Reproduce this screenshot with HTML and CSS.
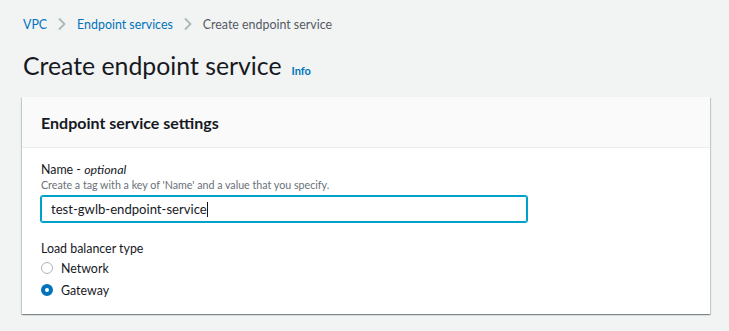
FILE: index.html
```html
<!DOCTYPE html>
<html lang="en">
<head>
<meta charset="UTF-8">
<meta name="viewport" content="width=device-width, initial-scale=1.0">
<title>Create endpoint service</title>
<link rel="stylesheet" href="styles.css">
</head>
<body>
    <div class="page">
        <nav class="breadcrumbs">
            <a href="#">VPC</a>
            <svg class="chevron" width="10" height="14" viewBox="0 0 10 14"><path d="M2 1.5l5.5 5.5L2 12.5" fill="none" stroke="#aab7b8" stroke-width="1.8"/></svg>
            <a href="#">Endpoint services</a>
            <svg class="chevron" width="10" height="14" viewBox="0 0 10 14"><path d="M2 1.5l5.5 5.5L2 12.5" fill="none" stroke="#aab7b8" stroke-width="1.8"/></svg>
            <span class="current">Create endpoint service</span>
        </nav>

        <div class="page-title">
            <h1>Create endpoint service</h1>
            <a href="#" class="info">Info</a>
        </div>

        <div class="panel">
            <div class="panel-header">
                <h2>Endpoint service settings</h2>
            </div>
            <div class="panel-body">
                <div class="field">
                    <label class="field-label">Name - <i>optional</i></label>
                    <div class="field-hint">Create a tag with a key of 'Name' and a value that you specify.</div>
                    <div class="text-input">test-gwlb-endpoint-service<span class="caret"></span></div>
                </div>
                <div class="field">
                    <label class="field-label">Load balancer type</label>
                    <div class="radio">
                        <span class="radio-dot"></span>
                        <span>Network</span>
                    </div>
                    <div class="radio">
                        <span class="radio-dot checked"></span>
                        <span>Gateway</span>
                    </div>
                </div>
            </div>
        </div>
    </div>
</body>
</html>
```

FILE: styles.css
```css
body {
    margin: 0;
    background-color: #f2f3f3;
    font-family: Lato, "Open Sans", Arial, sans-serif;
    color: #16191f;
}
.page {
    padding: 15px 19px 16px 22px;
}
.breadcrumbs {
    display: flex;
    align-items: center;
    height: 18px;
    font-size: 12.4px;
    padding-left: 1px;
}
.breadcrumbs a {
    color: #0073bb;
    text-decoration: none;
}
.breadcrumbs .current {
    color: #545b64;
}
.chevron {
    margin: 0 10px;
}
.page-title {
    display: flex;
    align-items: baseline;
    margin-top: 18px;
    height: 34px;
}
h1 {
    margin: 0;
    font-size: 24.8px;
    font-weight: 400;
    padding-left: 1px;
}
.info {
    margin-left: 10px;
    font-size: 11px;
    font-weight: 700;
    color: #0073bb;
    text-decoration: none;
}
.panel {
    margin-top: 12px;
    background-color: #fff;
    box-shadow: 0 1px 1px 0 rgba(0, 28, 36, 0.3), 1px 1px 1px 0 rgba(0, 28, 36, 0.15), -1px 1px 1px 0 rgba(0, 28, 36, 0.15);
}
.panel-header {
    height: 50px;
    display: flex;
    align-items: center;
    padding-left: 19px;
    background-color: #fafafa;
    border-bottom: 1px solid #eaeded;
}
h2 {
    margin: 0;
    font-size: 16px;
    font-weight: 700;
}
.panel-body {
    padding: 13px 19px 13px 19px;
}
.field + .field {
    margin-top: 18px;
}
.field-label {
    display: block;
    font-size: 12.4px;
    line-height: 17px;
}
.field-hint {
    font-size: 10.7px;
    color: #687078;
    line-height: 14px;
}
.text-input {
    margin-top: 4px;
    width: 486px;
    height: 26px;
    box-sizing: border-box;
    border: 1px solid #00a1c9;
    border-radius: 2px;
    box-shadow: 0 0 0 1px #00a1c9;
    padding-left: 9px;
    font-size: 13.1px;
    line-height: 24px;
}
.caret {
    display: inline-block;
    width: 1px;
    height: 15px;
    background-color: #16191f;
    vertical-align: -3px;
}
.radio {
    display: flex;
    align-items: center;
    height: 22px;
    font-size: 12.4px;
}
.radio-dot {
    width: 10px;
    height: 10px;
    border: 1px solid #aab7b8;
    border-radius: 50%;
    margin: 0 8px 0 0;
    box-sizing: content-box;
}
.radio-dot.checked {
    width: 4px;
    height: 4px;
    border: 4px solid #0073bb;
    background-color: #fff;
}
```
